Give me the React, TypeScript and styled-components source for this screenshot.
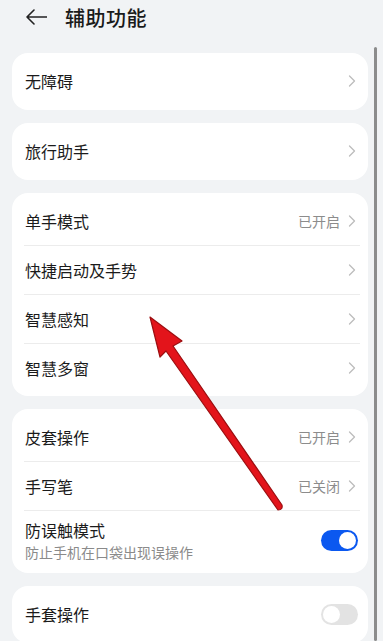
import React from "react";
import styled, { createGlobalStyle } from "styled-components";

const Global = createGlobalStyle`
  html, body { margin: 0; padding: 0; background: #f1f3f5; }
  body { font-family: "Noto Sans CJK SC", "Noto Sans", sans-serif; }
  * { box-sizing: border-box; }
`;

const Page = styled.div`
  position: relative;
  width: 383px;
  height: 641px;
  overflow: hidden;
  background: #f1f3f5;
`;

const Header = styled.div`
  height: 34px;
  display: flex;
  align-items: center;
  padding-left: 26px;
  gap: 18px;
`;

const Title = styled.div`
  font-size: 20px;
  font-weight: 500;
  color: #1a1a1a;
  letter-spacing: 0.5px;
`;

const List = styled.div`
  display: flex;
  flex-direction: column;
  gap: 13px;
  padding: 19px 15px 0 12px;
`;

const Card = styled.div<{ $single?: boolean }>`
  background: #ffffff;
  border-radius: 16px;
  padding: ${(p) => (p.$single ? "4px 0 5px" : "4px 0")};
  display: flex;
  flex-direction: column;
`;

const Row = styled.div<{ $tall?: boolean }>`
  height: ${(p) => (p.$tall ? "58px" : "48px")};
  display: flex;
  align-items: center;
  padding: 0 12px 0 13px;
`;

const Divider = styled.div`
  height: 1px;
  background: #ececec;
  margin: 0 8px 0 12px;
`;

const Labels = styled.div`
  flex: 1;
  display: flex;
  flex-direction: column;
  gap: 1px;
`;

const Label = styled.div`
  font-size: 16px;
  color: #1b1b1b;
  line-height: 22px;
`;

const Sub = styled.div`
  font-size: 14px;
  color: #8a8a8a;
  line-height: 20px;
`;

const Value = styled.div`
  font-size: 14px;
  color: #8c8c8c;
  margin-right: 8px;
`;

const Toggle = styled.div<{ $on?: boolean }>`
  position: relative;
  width: 37px;
  height: 21px;
  border-radius: 11px;
  margin-right: -2px;
  background: ${(p) => (p.$on ? "#0b58f0" : "#e3e3e3")};
  &::after {
    content: "";
    position: absolute;
    top: 2px;
    left: ${(p) => (p.$on ? "18px" : "2px")};
    width: 17px;
    height: 17px;
    border-radius: 50%;
    background: #ffffff;
  }
`;

const Scrollbar = styled.div`
  position: absolute;
  left: 374px;
  top: 47px;
  width: 3px;
  bottom: 0;
  background: #8c8c8c;
  border-radius: 2px;
`;

const ArrowOverlay = styled.svg`
  position: absolute;
  left: 0;
  top: 0;
  pointer-events: none;
`;

const Chevron = () => (
  <svg width="8" height="12" viewBox="0 0 8 12">
    <path d="M1.5 1 L6.5 6 L1.5 11" fill="none" stroke="#bdbdbd" strokeWidth="1.3" strokeLinecap="round" strokeLinejoin="round" />
  </svg>
);

const BackArrow = () => (
  <svg width="21" height="16" viewBox="0 0 21 16">
    <path d="M8 1 L1 8 L8 15 M1 8 L20.5 8" fill="none" stroke="#222" strokeWidth="1.6" strokeLinecap="round" strokeLinejoin="round" />
  </svg>
);

type Item = { label: string; value?: string; sub?: string; toggle?: "on" | "off" };

const groups: Item[][] = [
  [{ label: "无障碍" }],
  [{ label: "旅行助手" }],
  [
    { label: "单手模式", value: "已开启" },
    { label: "快捷启动及手势" },
    { label: "智慧感知" },
    { label: "智慧多窗" },
  ],
  [
    { label: "皮套操作", value: "已开启" },
    { label: "手写笔", value: "已关闭" },
    { label: "防误触模式", sub: "防止手机在口袋出现误操作", toggle: "on" },
  ],
  [{ label: "手套操作", toggle: "off" }],
];

export default function App() {
  return (
    <>
      <Global />
      <Page>
        <Header>
          <BackArrow />
          <Title>辅助功能</Title>
        </Header>
        <List>
          {groups.map((g, gi) => (
            <Card key={gi} $single={g.length === 1}>
              {g.map((it, i) => (
                <React.Fragment key={it.label}>
                  {i > 0 && <Divider />}
                  <Row $tall={!!it.sub}>
                    <Labels>
                      <Label>{it.label}</Label>
                      {it.sub && <Sub>{it.sub}</Sub>}
                    </Labels>
                    {it.value && <Value>{it.value}</Value>}
                    {it.toggle ? <Toggle $on={it.toggle === "on"} /> : <Chevron />}
                  </Row>
                </React.Fragment>
              ))}
            </Card>
          ))}
        </List>
        <Scrollbar />
        <ArrowOverlay width="383" height="641" viewBox="0 0 383 641">
          <path
            d="M150 317 L182 341 L173 346 L282 505 Q283 510 278 510 L166 351 L160 357 Z"
            fill="#e3141b"
            stroke="#9c0e10"
            strokeWidth="1.2"
            strokeLinejoin="round"
          />
        </ArrowOverlay>
      </Page>
    </>
  );
}
